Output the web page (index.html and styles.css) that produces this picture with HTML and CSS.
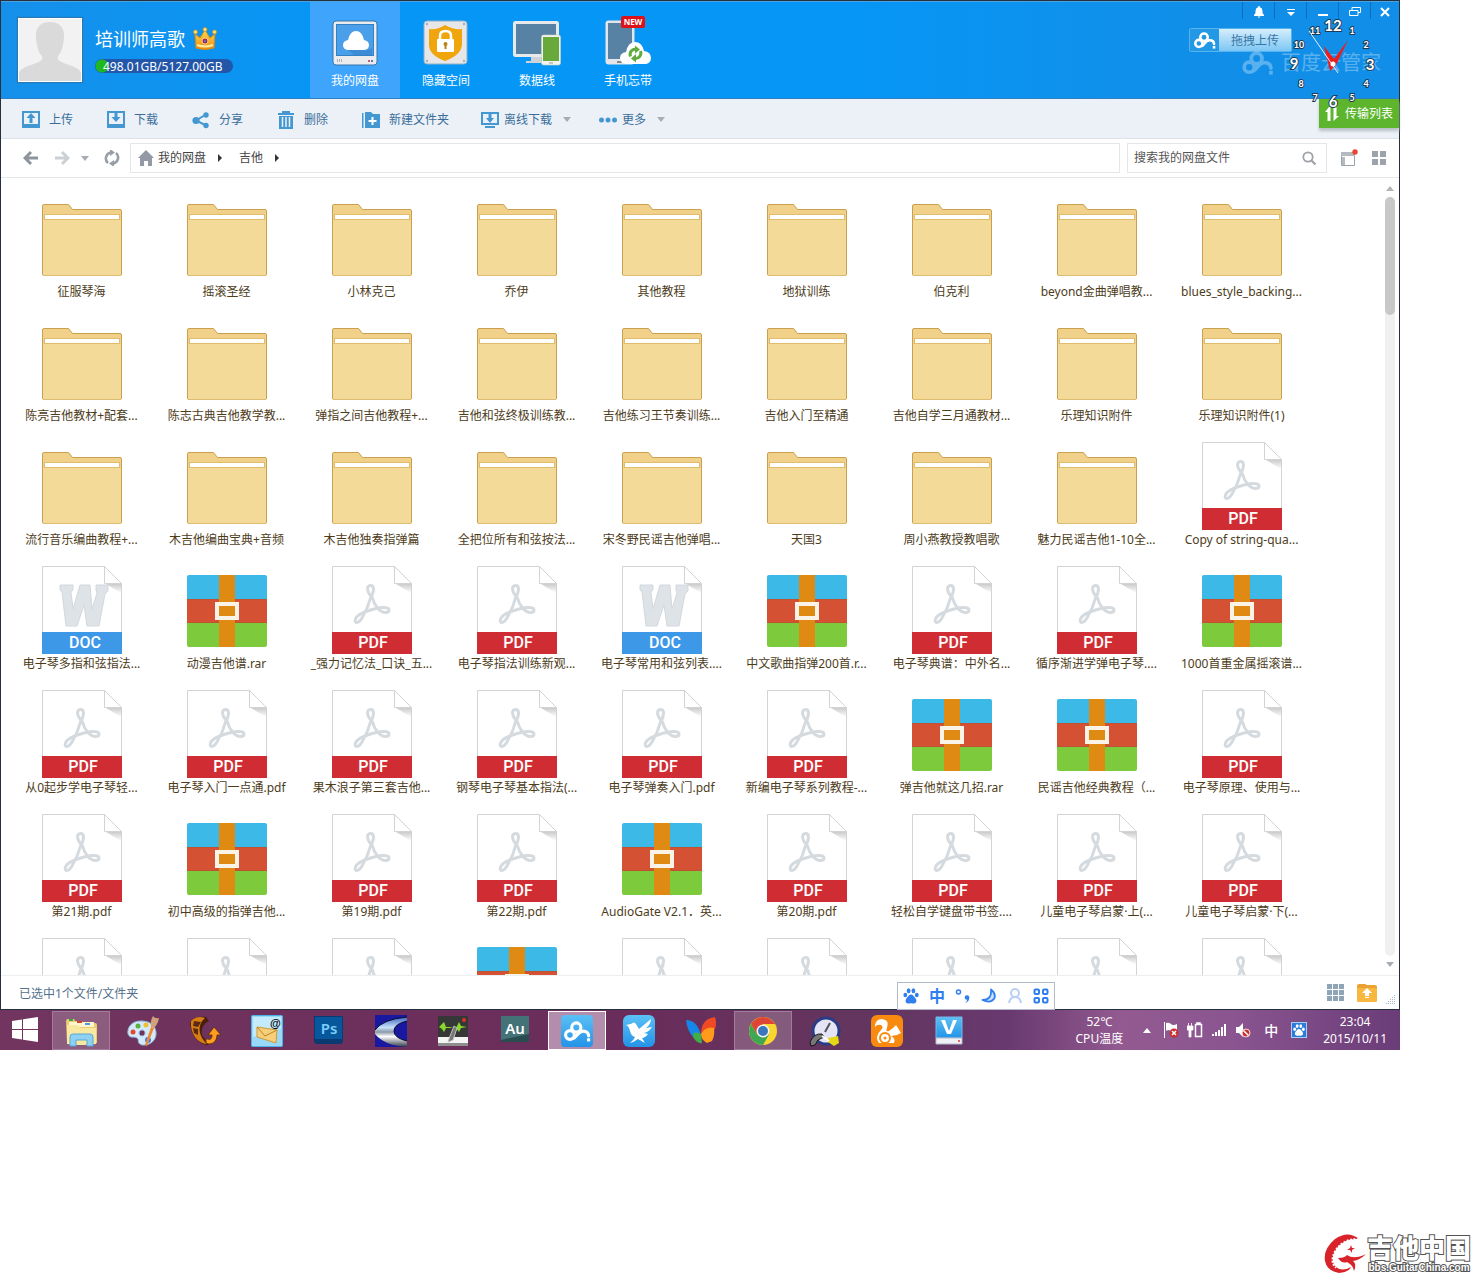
FILE: index.html
```
<!DOCTYPE html>
<html lang="zh-CN">
<head>
  <meta charset="UTF-8" />
  <meta name="viewport" content="width=device-width, initial-scale=1.0"/>
  <title>百度云管家</title>
  <link rel="stylesheet" href="styles.css">
</head>
<body>

  <!-- shared icons -->
  <svg class="defs" aria-hidden="true">
    <defs>
      <linearGradient id="fold-shade" x1="0" y1="0" x2="0" y2="1">
        <stop offset="0" stop-color="#cccccc"/><stop offset="1" stop-color="#ffffff"/>
      </linearGradient>
      <linearGradient id="sky" x1="0" y1="0" x2="0" y2="1">
        <stop offset="0" stop-color="#5bc0f5"/><stop offset="1" stop-color="#2493e8"/>
      </linearGradient>
      <linearGradient id="gold" x1="0" y1="0" x2="0" y2="1">
        <stop offset="0" stop-color="#ffdc4a"/><stop offset="1" stop-color="#f08a12"/>
      </linearGradient>
      <linearGradient id="steel" x1="0" y1="0" x2="0" y2="1">
        <stop offset="0" stop-color="#3a62c0"/><stop offset=".35" stop-color="#c8e2fa"/><stop offset=".5" stop-color="#8c98a8"/><stop offset=".65" stop-color="#ffffff"/><stop offset="1" stop-color="#303848"/>
      </linearGradient>
    </defs>
    <symbol id="folder" viewBox="0 0 80 88">
      <path d="M.5 12q0-1.500 1.500-1.500h24.500l4 5h47.500q1.500 0 1.500 1.500v63q0 1.500-1.500 1.500H2q-1.500 0-1.500-1.500z" fill="#f1d089" stroke="#c9a04d"/>
      <path d="M1 26h78v54q0 1.500-1.500 1.500h-75q-1.500 0-1.500-1.500z" fill="#f4da98"/>
      <rect x="2.500" y="20.500" width="75" height="5" fill="#fff" stroke="#e0bd6c"/>
    </symbol>
    <symbol id="sheet" viewBox="0 0 80 88">
      <path d="M.5.5h62l17 17V87H.5z" fill="#fff" stroke="#d2d3d5"/>
      <path d="M64 18h15v9z" fill="url(#fold-shade)"/>
      <path d="M62.500.5v17h17z" fill="#fff" stroke="#d2d3d5"/>
    </symbol>
    <symbol id="pdf" viewBox="0 0 80 88">
      <use href="#sheet"/>
      <path d="M40.500 32C34 25 34.500 19.500 38.500 19.500S42.500 25 38.500 32C36.500 40 33 47 30 52 26 58.500 22 57 23.500 53 25 49 32 46 37 44.500 44 42 49 41 53 41.500 58.500 42 58 46.500 53.500 46.500 48 46.500 42.500 40 40.500 32z" fill="none" stroke="#d5dadf" stroke-width="3" stroke-linejoin="round"/>
      <rect y="66" width="80" height="22" fill="#d02c33"/>
      <text class="badge" x="41" y="82">PDF</text>
    </symbol>
    <symbol id="doc" viewBox="0 0 80 88">
      <use href="#sheet"/>
      <path d="M18 19h13v5l-2 2 2 17 7-24h10l2 24 5-16-1-3v-5h12v6l-3 3-6 32H45l-3-21-7 21H24l-4-34-2-2z" fill="#dee3e8" stroke="#d3d8dd"/>
      <rect y="66" width="80" height="22" fill="#3d98e8"/>
      <text class="badge" x="43" y="82">DOC</text>
    </symbol>
    <symbol id="rar" viewBox="0 0 80 88">
      <path d="M0 33V11q0-2 2-2h76q2 0 2 2v22z" fill="#3db9e7"/>
      <path d="M0 33h80v24H0z" fill="#d55133"/>
      <path d="M0 57h80v22q0 2-2 2H2q-2 0-2-2z" fill="#7dca3c"/>
      <path d="M32 9h16v72H32z" fill="#df8a12"/>
      <path d="M0 33.500h32m16 0h32M0 56.500h32m16 0h32" stroke="#a4552c" stroke-opacity=".45"/>
      <rect x="30" y="38" width="20" height="14" fill="#df8a12" stroke="#faf4e8" stroke-width="4"/>
    </symbol>
    <symbol id="cloud-logo" viewBox="0 0 34 26">
      <g fill="none" stroke="currentColor" stroke-width="4" stroke-linecap="round">
        <circle cx="7.500" cy="17.500" r="5.500"/>
        <circle cx="15.500" cy="8" r="5.800"/>
        <path d="M12 21.500c4-1 5-9 12-9 5 0 7 3 7 6"/>
      </g>
      <rect x="29" y="21.500" width="4" height="4" fill="currentColor"/>
    </symbol>
    <symbol id="paw" viewBox="0 0 16 16">
      <g fill="currentColor">
        <ellipse cx="2.300" cy="7" rx="1.900" ry="2.300"/><ellipse cx="5.600" cy="2.800" rx="1.900" ry="2.500"/>
        <ellipse cx="10.400" cy="2.800" rx="1.900" ry="2.500"/><ellipse cx="13.800" cy="7" rx="1.900" ry="2.300"/>
        <path d="M8 6.500c2 0 3 2 4 3.200 2 2 2 5.300-1 5.800-1.500.2-2-.3-3-.3s-1.500.5-3 .3c-3-.5-3-3.800-1-5.800C5 8.500 6 6.500 8 6.500z"/>
      </g>
    </symbol>
  </svg>

  <main class="desktop">
    <section class="window">
      <header class="titlebar">
        <div class="user">
          <svg class="avatar" viewBox="0 0 64 64">
            <rect width="64" height="64" fill="#f2f2f2"/>
            <path d="M1 64v-9c1-4 6-6 15-9 7-3 9-4 8-8-4-4-5-10-6-18C17 8 24 4 32 4s15 4 14 16c-1 8-2 14-6 18-1 4 1 5 8 8 9 3 14 5 15 9v9z" fill="#dadada"/>
            <rect x=".5" y=".5" width="63" height="63" fill="none" stroke="#fff"/>
          </svg>
          <div class="account">
            <div class="name">培训师高歌
              <svg class="crown" viewBox="0 0 24 24">
                <path d="M3 21 2 7l5 4 5-8 5 8 5-4-1 14q-9 3-18 0z" fill="url(#gold)" stroke="#d98a12"/>
                <path d="M4 18q8 3 16 0" stroke="#fff0a0" stroke-width="2" fill="none"/>
                <g fill="#ffe46a" stroke="#dd8a1b" stroke-width=".7"><circle cx="2.500" cy="5" r="2"/><circle cx="12" cy="2.500" r="2"/><circle cx="21.500" cy="5" r="2"/></g>
                <circle cx="12" cy="14" r="3" fill="#a62b3c" stroke="#f8c9a0"/><circle cx="12" cy="14" r="1" fill="#4580e0"/>
              </svg>
            </div>
            <div class="storage">498.01GB/5127.00GB</div>
          </div>
        </div>

        <nav class="tabs">
          <a class="tab active" href="#">
            <svg viewBox="0 0 48 46">
              <rect x="2" y="1" width="44" height="44" rx="3" fill="#ececee" stroke="#3474ae"/>
              <rect x="5.500" y="4.500" width="37" height="31" fill="#4a9fea" stroke="#3480c4"/>
              <path d="M17 30h20q4-1 4-3v8H23z" fill="#3c8bd4"/>
              <path d="M17 30q-5-.5-5-5 0-4 5-5 2-9 8-9t8 9q5 1 5 5 0 4.500-5 5z" fill="#fff"/>
              <path d="M6.500 39v3m2-3v3m2-3v3" stroke="#b0b0b8"/><path d="M37 40h2v2h-2z" fill="#c8606c"/><path d="M40 40h2v2h-2z" fill="#5578b8"/>
            </svg>
            我的网盘
          </a>
          <a class="tab" href="#">
            <svg viewBox="0 0 48 46">
              <rect x="2" y="1" width="43" height="43" rx="3" fill="#e7e7e9" stroke="#8fb1c8"/>
              <g fill="#a8b0b8"><circle cx="5" cy="4" r="1.200"/><circle cx="42" cy="4" r="1.200"/><circle cx="5" cy="41" r="1.200"/><circle cx="42" cy="41" r="1.200"/></g>
              <path d="M7 9q9 1 16-4 8 5 17 4v16q-1 10-17 16Q7 35 7 25z" fill="#f0a50c"/>
              <path d="M18 20v-4q0-5 5.500-5t5.500 5v4" fill="none" stroke="#fff" stroke-width="2.500"/>
              <rect x="15" y="19" width="17" height="13" rx="1" fill="#fff"/>
              <circle cx="23.500" cy="24" r="2" fill="#b98414"/><path d="M22.500 25h2v4h-2z" fill="#b98414"/>
            </svg>
            隐藏空间
          </a>
          <a class="tab" href="#">
            <svg viewBox="0 0 48 46">
              <path d="M18 36h10v5h4v2H13v-2h5z" fill="#cfd3d8"/>
              <rect x="1.500" y="2.500" width="43" height="33" rx="1" fill="#5882a4" stroke="#e8e9eb" stroke-width="3"/>
              <rect x="28.500" y="15" width="19" height="30" rx="2" fill="#f1f3ee" stroke="#c6d5c0" stroke-width=".6"/>
              <rect x="30" y="17" width="16" height="24" fill="#69a93c"/><path d="M36 43h4" stroke="#999"/>
            </svg>
            数据线
          </a>
          <a class="tab" href="#">
            <svg viewBox="0 0 48 46">
              <rect x="1.500" y=".5" width="29" height="44" rx="3" fill="#e3e5e8"/>
              <rect x="4" y="3" width="24" height="36" fill="#5882a4"/>
              <path d="M13 42h5" stroke="#888" stroke-width="2"/>
              <path d="M22 44q-6-1-6-6 0-5 6-6 2-10 9-10t9 9q7 1 7 7 0 5-5 6z" fill="#fff"/>
              <g fill="none" stroke="#61ac40" stroke-width="3"><path d="M26.500 36.500A5.500 5.500 0 0 1 32 29M36.500 31A5.500 5.500 0 0 1 31 38.500"/></g>
              <path d="m31 25.500 5 4-5 4zM32 34l-5 4.500 5 4z" fill="#61ac40"/>
            </svg>
            手机忘带
            <span class="new">NEW</span>
          </a>
        </nav>

        <div class="title-right">
          <div class="controls">
            <button aria-label="消息"><svg viewBox="0 0 12 12"><path d="M6 0q1 0 1 1.200Q9.500 2 9.500 5v2L11 9v1H1V9l1.500-2V5Q2.500 2 5 1.200 5 0 6 0zM4.500 10.500h3L6 12z" fill="#fff"/></svg></button>
            <button aria-label="菜单"><svg viewBox="0 0 12 12"><path d="M2 3h8v1H2zM2 6h8l-4 4z" fill="#fff"/></svg></button>
            <button aria-label="最小化"><svg viewBox="0 0 12 12"><path d="M1 8h10v2H1z" fill="#fff"/></svg></button>
            <button aria-label="还原"><svg viewBox="0 0 12 12"><path d="M3 4.500v-3h8.500v5H9M.5 4.500H9v5H.5z" fill="none" stroke="#fff"/></svg></button>
            <button aria-label="关闭"><svg viewBox="0 0 12 12"><path d="m2 2 8 8M10 2l-8 8" stroke="#fff" stroke-width="2"/></svg></button>
          </div>
          <button class="drop-upload"><span class="drop-logo"><svg><use href="#cloud-logo"/></svg></span><span class="drop-text">拖拽上传</span></button>
          <div class="brand"><svg><use href="#cloud-logo"/></svg>百度云管家</div>
        </div>
      </header>

      <div class="toolbar">
        <button class="tool"><svg viewBox="0 0 18 18"><path d="M0 0h18v17H0z" fill="#4498d2"/><path d="M2 2h14v13H2z" fill="#ecf1f8"/><path d="m9 2 4.500 5h-3v5h-3V7h-3zM6 0h6v2H6zM2 13h14v2H2z" fill="#4498d2"/></svg>上传</button>
        <button class="tool"><svg viewBox="0 0 18 18"><path d="M0 0h18v17H0z" fill="#4498d2"/><path d="M2 2h14v13H2z" fill="#ecf1f8"/><path d="M7.500 0h3v6h3L9 11 4.500 6h3zM2 13h14v2H2z" fill="#4498d2"/></svg>下载</button>
        <button class="tool"><svg viewBox="0 0 18 18"><path d="M14 3.500 4 9.500l10 5" fill="none" stroke="#4498d2" stroke-width="2"/><g fill="#4498d2"><circle cx="14" cy="4" r="2.700"/><circle cx="4" cy="9.500" r="3.600"/><circle cx="14" cy="14.500" r="2.700"/></g></svg>分享</button>
        <button class="tool"><svg viewBox="0 0 18 18"><path d="M1 2h4V0h8v2h4v2H1zM2 5h14v13H2z" fill="#4498d2"/><path d="M5.500 6v10M9 6v10m3.500-10v10" stroke="#ecf1f8" stroke-width="1.500"/></svg>删除</button>
        <button class="tool"><svg viewBox="0 0 18 18"><path d="M0 2h1.500v15H0zM3 1h6l2 2h7v14H3z" fill="#4498d2"/><path d="M10.500 6v8m-4-4h8" stroke="#fff" stroke-width="2"/></svg>新建文件夹</button>
        <button class="tool has-menu"><svg viewBox="0 0 18 18"><path d="M1 2h16v11H1z" fill="none" stroke="#4498d2" stroke-width="2"/><path d="M4 15h10v2H4zM7.500 3h3v4H13l-4 5-4-5h2.500z" fill="#4498d2"/></svg>离线下载<i class="caret"></i></button>
        <button class="tool has-menu"><svg viewBox="0 0 18 18"><g fill="#4498d2"><circle cx="2.500" cy="9" r="2.500"/><circle cx="9" cy="9" r="2.500"/><circle cx="15.500" cy="9" r="2.500"/></g></svg>更多<i class="caret"></i></button>
        <button class="transfers"><svg viewBox="0 0 14 14"><path d="M4 0 0 5h2.500v9h3V0zM8.500 0v14L14 9h-2.500V0z" fill="#fff"/></svg>传输列表</button>
      </div>

      <div class="addressbar">
        <div class="history">
          <button aria-label="后退"><svg viewBox="0 0 16 16"><path d="M15 8H2m6-6L2 8l6 6" fill="none" stroke="#8d949d" stroke-width="3"/></svg></button>
          <button aria-label="前进"><svg viewBox="0 0 16 16"><path d="M1 8h13M8 2l6 6-6 6" fill="none" stroke="#ccd0d5" stroke-width="3"/></svg></button>
          <button class="narrow" aria-label="历史"><i class="caret"></i></button>
          <button aria-label="刷新"><svg viewBox="0 0 16 16"><path d="M4 13A6 6 0 0 1 7 2.500M12 3A6 6 0 0 1 9 13.500" fill="none" stroke="#989fa7" stroke-width="2.600"/><path d="m6-1 5 3.500L6 6zM10 17l-5-3.500L10 10z" fill="#989fa7"/></svg></button>
        </div>
        <nav class="path">
          <svg class="home" viewBox="0 0 16 16"><path d="m8 0 8 8h-2v8h-4v-5H6v5H2V8H0z" fill="#939aa5"/></svg>
          <a href="#">我的网盘</a><i class="next"></i>
          <a href="#">吉他</a><i class="next"></i>
        </nav>
        <label class="search">
          <input type="text" placeholder="搜索我的网盘文件" aria-label="搜索我的网盘文件">
          <svg viewBox="0 0 14 14"><circle cx="6" cy="6" r="4.700" fill="none" stroke="#9da2a8" stroke-width="1.800"/><path d="m9 9 4.500 4.500" stroke="#9da2a8" stroke-width="2.200"/></svg>
        </label>
        <button class="view" aria-label="布局"><svg viewBox="0 0 18 18"><path d="M1.500 3.500h13v13h-13z" fill="#fff" stroke="#9ca2aa"/><path d="M1 3h14v4H1zM2 8h3v8H2z" fill="#b5bac1"/><circle cx="15" cy="3" r="2.700" fill="#e8452a"/></svg></button>
        <button class="view" aria-label="缩略图"><svg viewBox="0 0 18 18"><path d="M2 2h6v6H2zm8 0h6v6h-6zM2 10h6v6H2zm8 0h6v6h-6z" fill="#9ca3ab"/></svg></button>
      </div>

      <div class="content">
        <ul class="files">
          <li class="file"><svg><use href="#folder"/></svg>征服琴海</li>
          <li class="file"><svg><use href="#folder"/></svg>摇滚圣经</li>
          <li class="file"><svg><use href="#folder"/></svg>小林克己</li>
          <li class="file"><svg><use href="#folder"/></svg>乔伊</li>
          <li class="file"><svg><use href="#folder"/></svg>其他教程</li>
          <li class="file"><svg><use href="#folder"/></svg>地狱训练</li>
          <li class="file"><svg><use href="#folder"/></svg>伯克利</li>
          <li class="file"><svg><use href="#folder"/></svg>beyond金曲弹唱教...</li>
          <li class="file"><svg><use href="#folder"/></svg>blues_style_backing...</li>

          <li class="file"><svg><use href="#folder"/></svg>陈亮吉他教材+配套...</li>
          <li class="file"><svg><use href="#folder"/></svg>陈志古典吉他教学教...</li>
          <li class="file"><svg><use href="#folder"/></svg>弹指之间吉他教程+...</li>
          <li class="file"><svg><use href="#folder"/></svg>吉他和弦终极训练教...</li>
          <li class="file"><svg><use href="#folder"/></svg>吉他练习王节奏训练...</li>
          <li class="file"><svg><use href="#folder"/></svg>吉他入门至精通</li>
          <li class="file"><svg><use href="#folder"/></svg>吉他自学三月通教材...</li>
          <li class="file"><svg><use href="#folder"/></svg>乐理知识附件</li>
          <li class="file"><svg><use href="#folder"/></svg>乐理知识附件(1)</li>

          <li class="file"><svg><use href="#folder"/></svg>流行音乐编曲教程+...</li>
          <li class="file"><svg><use href="#folder"/></svg>木吉他编曲宝典+音频</li>
          <li class="file"><svg><use href="#folder"/></svg>木吉他独奏指弹篇</li>
          <li class="file"><svg><use href="#folder"/></svg>全把位所有和弦按法...</li>
          <li class="file"><svg><use href="#folder"/></svg>宋冬野民谣吉他弹唱...</li>
          <li class="file"><svg><use href="#folder"/></svg>天国3</li>
          <li class="file"><svg><use href="#folder"/></svg>周小燕教授教唱歌</li>
          <li class="file"><svg><use href="#folder"/></svg>魅力民谣吉他1-10全...</li>
          <li class="file"><svg><use href="#pdf"/></svg>Copy of string-qua...</li>

          <li class="file"><svg><use href="#doc"/></svg>电子琴多指和弦指法...</li>
          <li class="file"><svg><use href="#rar"/></svg>动漫吉他谱.rar</li>
          <li class="file"><svg><use href="#pdf"/></svg>_强力记忆法_口诀_五...</li>
          <li class="file"><svg><use href="#pdf"/></svg>电子琴指法训练新观...</li>
          <li class="file"><svg><use href="#doc"/></svg>电子琴常用和弦列表....</li>
          <li class="file"><svg><use href="#rar"/></svg>中文歌曲指弹200首.r...</li>
          <li class="file"><svg><use href="#pdf"/></svg>电子琴典谱：中外名...</li>
          <li class="file"><svg><use href="#pdf"/></svg>循序渐进学弹电子琴....</li>
          <li class="file"><svg><use href="#rar"/></svg>1000首重金属摇滚谱...</li>

          <li class="file"><svg><use href="#pdf"/></svg>从0起步学电子琴轻...</li>
          <li class="file"><svg><use href="#pdf"/></svg>电子琴入门一点通.pdf</li>
          <li class="file"><svg><use href="#pdf"/></svg>果木浪子第三套吉他...</li>
          <li class="file"><svg><use href="#pdf"/></svg>钢琴电子琴基本指法(...</li>
          <li class="file"><svg><use href="#pdf"/></svg>电子琴弹奏入门.pdf</li>
          <li class="file"><svg><use href="#pdf"/></svg>新编电子琴系列教程-...</li>
          <li class="file"><svg><use href="#rar"/></svg>弹吉他就这几招.rar</li>
          <li class="file"><svg><use href="#rar"/></svg>民谣吉他经典教程（...</li>
          <li class="file"><svg><use href="#pdf"/></svg>电子琴原理、使用与...</li>

          <li class="file"><svg><use href="#pdf"/></svg>第21期.pdf</li>
          <li class="file"><svg><use href="#rar"/></svg>初中高级的指弹吉他...</li>
          <li class="file"><svg><use href="#pdf"/></svg>第19期.pdf</li>
          <li class="file"><svg><use href="#pdf"/></svg>第22期.pdf</li>
          <li class="file"><svg><use href="#rar"/></svg>AudioGate V2.1．英...</li>
          <li class="file"><svg><use href="#pdf"/></svg>第20期.pdf</li>
          <li class="file"><svg><use href="#pdf"/></svg>轻松自学键盘带书签....</li>
          <li class="file"><svg><use href="#pdf"/></svg>儿童电子琴启蒙·上(...</li>
          <li class="file"><svg><use href="#pdf"/></svg>儿童电子琴启蒙·下(...</li>

          <li class="file"><svg><use href="#pdf"/></svg></li>
          <li class="file"><svg><use href="#pdf"/></svg></li>
          <li class="file"><svg><use href="#pdf"/></svg></li>
          <li class="file"><svg><use href="#rar"/></svg></li>
          <li class="file"><svg><use href="#pdf"/></svg></li>
          <li class="file"><svg><use href="#pdf"/></svg></li>
          <li class="file"><svg><use href="#pdf"/></svg></li>
          <li class="file"><svg><use href="#pdf"/></svg></li>
          <li class="file"><svg><use href="#pdf"/></svg></li>
        </ul>
        <div class="scrollbar">
          <i class="caret up"></i>
          <div class="track"><div class="thumb"></div></div>
          <i class="caret"></i>
        </div>
      </div>

      <footer class="statusbar">
        <span class="selected">已选中1个文件/文件夹</span>
        <button aria-label="网格"><svg viewBox="0 0 20 18"><path d="M2 0h5v5H2zm6 0h5v5H8zm6 0h5v5h-5zM2 6h5v5H2zm6 0h5v5H8zm6 0h5v5h-5zM2 12h5v5H2zm6 0h5v5H8zm6 0h5v5h-5z" fill="#8fa4b4"/></svg></button>
        <button aria-label="上传文件夹"><svg viewBox="0 0 20 18"><path d="M0 2q0-2 2-2h6l2 1h8q2 0 2 2v13q0 2-2 2H2q-2 0-2-2z" fill="#e9a233"/><path d="M0 4h20v12q0 2-2 2H2q-2 0-2-2z" fill="#f8b840"/><path d="m10 4 5 5h-3v3H8V9H5zM8 13h4v1H8z" fill="#fff"/></svg></button>
        <svg class="grip" viewBox="0 0 10 10"><path d="M8 0h1v1H8zM6 2h1v1H6zm2 0h1v1H8zM4 4h1v1H4zm2 0h1v1H6zm2 0h1v1H8zM2 6h1v1H2zm2 0h1v1H4zm2 0h1v1H6zm2 0h1v1H8zM0 8h1v1H0zm2 0h1v1H2zm2 0h1v1H4zm2 0h1v1H6zm2 0h1v1H8z" fill="#a5b8c8"/></svg>
      </footer>

      <!-- input method bar, floats above the status bar -->
      <div class="ime">
        <svg viewBox="0 0 16 16"><use href="#paw"/></svg>
        <b>中</b>
        <svg viewBox="0 0 16 16"><circle cx="3.500" cy="4" r="2" fill="none" stroke="currentColor" stroke-width="1.500"/><circle cx="12" cy="9.500" r="2.300" fill="currentColor"/><path d="M14.300 9.500q0 4-4 5.500 2-2 2-4z" fill="currentColor"/></svg>
        <svg viewBox="0 0 16 16"><path d="M10 1.500q5 4 3.500 8.500Q10 16 1.500 12 11 12 10 1.500z" fill="#cfe0ff" stroke="currentColor" stroke-width="1.800" stroke-linejoin="round"/></svg>
        <svg class="dim" viewBox="0 0 16 16"><circle cx="8" cy="5" r="4" fill="none" stroke="currentColor" stroke-width="2"/><path d="M2 15q1-6 6-6t6 6" fill="none" stroke="currentColor" stroke-width="2"/></svg>
        <svg viewBox="0 0 16 16"><g fill="none" stroke="currentColor" stroke-width="2"><rect x="1.500" y="1.500" width="4.500" height="4.500" rx="1"/><rect x="10" y="1.500" width="4.500" height="4.500" rx="1"/><rect x="1.500" y="10" width="4.500" height="4.500" rx="1"/><rect x="10" y="10" width="4.500" height="4.500" rx="1"/></g></svg>
      </div>
    </section>

    <div class="taskbar">
      <button class="start" aria-label="开始"><svg viewBox="0 0 32 32"><path d="m3 7 10-1.500V15H3zm11-1.700L29 3v12H14zM3 16h10v9.500L3 24zm11 0h15v12l-15-2.300z" fill="#fff"/></svg></button>
      <button class="app open" aria-label="资源管理器"><svg viewBox="0 0 32 32"><path d="M1 6q0-2 2-2h6l1 2h7l1 2h12q2 0 2 2v18q-15 4-30 0z" fill="#e9cd70"/><path d="M4 7h25v5H4z" fill="#fff6cf"/><path d="M2 10h11l2 3h16v16q-15 2-29 0z" fill="#f9e9a0"/><path d="M4 4h4v2H4z" fill="#2fa84a"/><path d="M12 6h5v2h-5z" fill="#d24030"/><path d="M20 8h5v2h-5z" fill="#4a9be0"/><path d="M5 31V22q0-3 3-3h17q3 0 3 3v9h-6v-6H11v6z" fill="#8fd1f2" stroke="#56a8d8"/></svg></button>
      <button class="app" aria-label="画图"><svg viewBox="0 0 32 32"><path d="M14 6C4 6 0 13 1 19c2 5 6 2 9 4s-1 5 5 7c8 1 15-5 14-13C28 9 21 6 14 6zm1 15a3 3 0 1 1 .1 0z" fill="#d5e9f8" fill-rule="evenodd" stroke="#8cb8dc"/><circle cx="6" cy="17" r="2.500" fill="#e04830"/><circle cx="11" cy="11" r="2.500" fill="#59b03c"/><circle cx="19" cy="10" r="2.500" fill="#f0bf30"/><circle cx="21" cy="25" r="3" fill="#3f7ce0"/><path d="m18 30 6-18 3 1-7 18z" fill="#ee8a30"/><path d="M24 12q-1-6 2-11 2 3 6 2-1 6-5 10z" fill="#cfa27c"/></svg></button>
      <button class="app" aria-label="格式转换"><svg viewBox="0 0 32 32"><path d="M1 8C2 3 10 1 17 2l3 4c-6 3-8 8-7 14l7 10C9 30 2 20 1 8z" fill="#48200c"/><path d="M2 6c4-4 9-5 14-3-7 6-8 16 2 26C7 28 1 17 2 6z" fill="#d67d13"/><path d="m5 6 7 1-3 5-5-1zM4 13l5 1v6l-4-2z" fill="#5b2a10"/><path d="M19 24c-3-1-3 5 1 5 6 0 8-5 8-9h4l-7-8-6 8h4c0 3-1 5-4 4z" fill="#ff9e1e" stroke="#663310"/></svg></button>
      <button class="app" aria-label="邮件"><svg viewBox="0 0 32 32"><rect x=".5" y=".5" width="31" height="31" rx="1" fill="#9ad9f5" stroke="#48b3e4"/><path d="M2 2h28v12L2 22z" fill="#c4ebfb"/><path d="m6 12 20 3-1 13-19-6z" fill="#f6cf79" stroke="#cf9838"/><path d="m6 12 8 9 12-6" fill="none" stroke="#b98228"/><text x="19" y="12" class="at">@</text></svg></button>
      <button class="app" aria-label="Photoshop"><svg viewBox="0 0 32 32"><path d="M1 1h29v26l-2 2H3l-2-2z" fill="#0b3a72"/><path d="M2 2h27v22H2z" fill="#07579c"/><text x="16" y="19" class="adobe ps">Ps</text></svg></button>
      <button class="app" aria-label="播放器"><svg viewBox="0 0 32 32"><path d="M0 0h32v32H0z" fill="#1918a0"/><path d="M32 2Q8 4 0 15v4q10 12 32 13v-6Q19 23 19 16T32 6z" fill="url(#steel)"/><path d="M32 2Q8 4 0 15M32 6Q19 9 19 16t13 10" fill="none" stroke="#080830"/></svg></button>
      <button class="app" aria-label="录音"><svg viewBox="0 0 32 32"><path d="M1 1h30v22H1z" fill="#353836"/><path d="M1 22h30v6H1z" fill="#f4f4f4"/><path d="M1 28h30v3H1z" fill="#8e8e8e"/><path d="m2 12 3-3 2-2 2 5 4 0 3 1 3 0 3-6 2 4 6 1-6 1-2 4-3-4-6 0-4 0-2 4-2-3z" fill="#88d72a"/><path d="m17 11 3 2-4 12-5 2 2-6z" fill="#777" stroke="#c0c0c0"/><circle cx="27" cy="5" r="2" fill="#d32"/></svg></button>
      <button class="app" aria-label="Audition"><svg viewBox="0 0 32 32"><path d="M2 1h28v26H2z" fill="#284c50"/><path d="M2 1h28v18L2 25z" fill="#437277"/><text x="16" y="19" class="adobe au">Au</text></svg></button>
      <button class="app current" aria-label="百度云管家"><svg viewBox="0 0 32 32"><rect width="32" height="32" rx="4" fill="url(#sky)"/><use href="#cloud-logo" class="on-blue" x="3" y="6" width="27" height="21"/></svg></button>
      <button class="app" aria-label="迅雷"><svg viewBox="0 0 32 32"><rect width="32" height="32" rx="6" fill="url(#sky)"/><path d="M3 10q4-1 5-1Q11 6 13 9l3 5L28 4q0 5-5 9l6-1q-3 5-8 6l4 1q-3 4-6 4l3 5q-5-3-7-4-4 3-8 4 4-3 5-6-4-1-5-6-1-5-4-6z" fill="#fff"/></svg></button>
      <button class="app" aria-label="MSN"><svg viewBox="0 0 32 32"><path d="M1 5q11 0 15 15-3 3-7 3Q2 16 1 5z" fill="#1687e8"/><path d="M30 2q-14 2-14 17 12-1 14-5 2-6 0-12z" fill="#f04924"/><path d="M16 19q5-8 13-6 1 8-2 13l-5 2q-6-3-6-9z" fill="#ff9a1b"/><path d="M16 19q-9-4-8 3 4 7 9 6z" fill="#3fae49"/></svg></button>
      <button class="app open" aria-label="Chrome"><svg viewBox="0 0 32 32"><circle cx="16" cy="16" r="14" fill="#fbd52f"/><path d="M3.900 9A14 14 0 0 1 28.100 9H16L10 19.500z" fill="#dd4634"/><path d="M3.900 9A14 14 0 0 0 16 30l6-10.500H10z" fill="#3fa751"/><circle cx="16" cy="16" r="6.500" fill="#f5f5f5"/><circle cx="16" cy="16" r="5" fill="#3977bd"/></svg></button>
      <button class="app" aria-label="时钟"><svg viewBox="0 0 32 32"><circle cx="17" cy="16" r="13" fill="#e4e4f6" stroke="#2a3c86" stroke-width="3"/><path d="m16 17 5-9" stroke="#555" stroke-width="2"/><path d="M1 27q4-9 12-8l2 3-6 3-3 5-4 1z" fill="#777" stroke="#151515"/><path d="m19 23 10-2 1 7-5 3-6-4z" fill="#e6d815"/><path d="m13 21 7 5" stroke="#fff" stroke-width="2"/></svg></button>
      <button class="app" aria-label="UC"><svg viewBox="0 0 32 32"><rect width="32" height="32" rx="6" fill="#f98a10"/><path d="M8 28Q3 22 10 15q3-3 0-5-4-1-6 2 0-8 7-8 8 1 5 9-2 4 2 3l4-3 3-3 2 3 3 5-4 2-6 1q5 3 3 7z" fill="#fff"/><circle cx="14" cy="23" r="5" fill="#fff" stroke="#f98a10" stroke-width="2"/><circle cx="14" cy="23" r="1.500" fill="#f98a10"/></svg></button>
      <button class="app" aria-label="微云"><svg viewBox="0 0 32 32"><path d="M3 2h26v21H3z" fill="url(#sky)" stroke="#79b8e8"/><path d="M3 23h26v6H3z" fill="#f0f1f5" stroke="#b4b8c8"/><path d="M8 5h4l4 11 4-11h4l-6 14h-4z" fill="#fff"/><circle cx="26" cy="26" r="1" fill="#e33"/></svg></button>

      <div class="tray">
        <div class="reading">52℃<br>CPU温度</div>
        <i class="caret up"></i>
        <svg viewBox="0 0 16 16"><path d="M1 0h1v16H1zM3 1q3-1 5 1t6 0v7q-3 2-6 0T3 9z" fill="#fff"/><circle cx="11" cy="11" r="4.500" fill="#c83030"/><path d="m9 9 4 4m0-4-4 4" stroke="#fff" stroke-width="1.500"/></svg>
        <svg viewBox="0 0 16 16"><path d="M8.500 2.500h6v12h-6zM10 1h3v1h-3z" fill="none" stroke="#fff" stroke-width="1.500"/><path d="M1.500 1v3m3-3v3M0 4h6v4H4v7H2V8H0z" fill="#fff" stroke="#fff" stroke-width=".8"/></svg>
        <svg viewBox="0 0 16 16"><path d="M1 12h2v2H1zm3-2h2v4H4zm3-2h2v6H7zm3-3h2v9h-2zm3-3h2v12h-2z" fill="#fff"/></svg>
        <svg viewBox="0 0 16 16"><path d="M1 5h3l4-4v14l-4-4H1z" fill="#fff"/><circle cx="11" cy="11" r="4" fill="#c83030" stroke="#f7dada"/><path d="m8.500 8.500 5 5" stroke="#fff" stroke-width="1.500"/></svg>
        <b>中</b>
        <svg class="paw-badge" viewBox="0 0 16 16"><rect x=".5" y=".5" width="15" height="15" fill="#2b7cd8" stroke="#a9cdf5"/><use href="#paw" x="2" y="2" width="12" height="12"/></svg>
        <time class="clock-text">23:04<br>2015/10/11</time>
      </div>
    </div>

    <!-- desktop clock gadget -->
    <svg class="clock" viewBox="0 0 100 100">
      <g class="major">
        <text x="50" y="17">12</text><text x="87" y="56">3</text><text x="50" y="93">6</text><text x="11" y="55">9</text>
      </g>
      <g class="minor">
        <text x="69" y="20">1</text><text x="83" y="34">2</text><text x="83" y="73">4</text><text x="69" y="87">5</text>
        <text x="32" y="87">7</text><text x="18" y="73">8</text><text x="16" y="34">10</text><text x="32" y="20">11</text>
      </g>
      <path d="m41 32 10 13L65 26 53 51l-6 6z" fill="#ee1c1c"/>
      <path d="m26 17 29 42" stroke="#e8eef5"/>
      <circle cx="50" cy="50" r="2.500" fill="#fff"/>
    </svg>
  </main>

  <footer class="forum">
    <svg class="forum-logo" viewBox="0 0 44 40">
      <path d="M36 5Q25-4 12 5 0 15 2 27q2 10 14 12 10-1 12-6-9 5-15 0Q6 26 14 14q8-10 22-9z" fill="#d8232a"/>
      <path d="M36 5Q20 4 12 17q-6 11 1 17" fill="none" stroke="#fff" stroke-width="1.500" stroke-dasharray="2 1.500"/>
      <path d="M15 24q7 0 9-3 7 5 19-1-6 6-13 7 4 3 1 10-1-6-7-9-5 2-9-4zM28 11l1 3 3 0-3 2 0 3-2-3-3 0 3-2z" fill="#d8232a"/>
    </svg>
    <div class="forum-name"><strong>吉他中国</strong><span>bbs.GuitarChina.com</span></div>
  </footer>

</body>
</html>
```
FILE: styles.css
```
:root {
  --blue: #0696f6;
  --blue-dark: #118fe8;
  --link: #3a6e9a;
  --border: #e4e6ea;
  --tint: #ecf1f8;
}

* {
  box-sizing: border-box;
}

body {
  margin: 0;
  height: 100vh;
  display: flex;
  flex-direction: column;
  background: #fff;
  font-family: "Noto Sans", "Noto Sans CJK SC", sans-serif;
  font-size: 12px;
  line-height: 20px;
  color: #444;
}

button {
  border: 0;
  padding: 0;
  background: none;
  font: inherit;
  color: inherit;
}

a {
  color: inherit;
  text-decoration: none;
}

svg {
  display: block;
  flex: none;
}

.defs {
  position: absolute;
  width: 0;
  height: 0;
}

.caret {
  width: 0;
  height: 0;
  border: 4px solid transparent;
  border-top: 5px solid #a8adb3;
  border-bottom: 0;
}

.caret.up {
  border-top: 0;
  border-bottom: 5px solid #b4b4b4;
}

.desktop {
  position: relative;
  flex: 1;
  min-height: 0;
  margin-right: 78px;
  display: flex;
  flex-direction: column;
}

.window {
  position: relative;
  flex: 1;
  min-height: 0;
  display: flex;
  flex-direction: column;
  border: 1px solid #26303c;
}

/* title bar */
.titlebar {
  display: flex;
  height: 98px;
  border-top: 1px solid #4aa4e4;
  border-bottom: 1px solid #2f7fc4;
  background: linear-gradient(to right, #1590ea, var(--blue) 25%, var(--blue) 60%, var(--blue-dark) 85%);
  color: #fff;
}

.user {
  display: flex;
  gap: 13px;
  width: 309px;
  padding: 16px 0 0 17px;
}

.avatar {
  width: 64px;
  height: 64px;
  box-shadow: 0 0 1px 1px #2878b4;
}

.name {
  display: flex;
  align-items: center;
  gap: 8px;
  height: 41px;
  font-size: 18px;
}

.crown {
  width: 24px;
  height: 24px;
}

.storage {
  width: 138px;
  height: 14px;
  padding-left: 8px;
  border-radius: 7px;
  background: radial-gradient(circle at 7px 7px, #20b820 6px, transparent 7px), #2256a8;
  line-height: 15px;
}

.tabs {
  display: flex;
  gap: 1px;
}

.tab {
  position: relative;
  width: 90px;
  padding-top: 18px;
  text-align: center;
}

.tab svg {
  width: 48px;
  height: 46px;
  margin: 0 auto 5px;
}

.tab.active {
  background: #3fa5fc;
}

.new {
  position: absolute;
  top: 14px;
  left: 38px;
  width: 24px;
  border-radius: 2px;
  background: #dd1218;
  font-size: 8px;
  font-weight: bold;
  line-height: 12px;
}

.title-right {
  flex: 1;
  display: flex;
  flex-direction: column;
  align-items: flex-end;
}

.controls {
  display: flex;
}

.controls button {
  width: 32px;
  height: 17px;
  padding: 3px 0 0 10px;
  border-left: 1px solid #0c6fbc;
}

.controls button:last-child {
  width: 29px;
  padding-left: 8px;
}

.controls svg {
  width: 12px;
  height: 12px;
}

.drop-upload {
  display: flex;
  height: 24px;
  margin: 9px 107px 0 0;
  border: 1px solid #55b4f0;
  border-radius: 2px;
}

.drop-logo {
  width: 29px;
  padding: 3px 4px;
  background: #2398e4;
}

.drop-logo svg {
  width: 22px;
  height: 17px;
}

.drop-text {
  width: 72px;
  background: linear-gradient(#d5eefc, #7cc6f4);
  color: #3a76a4;
  line-height: 24px;
  height: 22px;
}

.brand {
  display: flex;
  align-items: center;
  gap: 6px;
  height: 22px;
  margin-right: 18px;
  font-size: 20px;
  opacity: .3;
}

.brand svg {
  width: 34px;
  height: 24px;
}

/* toolbar */
.toolbar {
  display: flex;
  gap: 34px;
  height: 40px;
  padding-left: 21px;
  border-bottom: 1px solid #dde2e8;
  background: var(--tint);
  color: var(--link);
}

.tool {
  display: flex;
  align-items: center;
  gap: 9px;
  padding-top: 2px;
}

.tool svg {
  width: 18px;
  height: 18px;
}

.has-menu {
  gap: 5px;
  margin-left: -2px;
}

.has-menu + .has-menu {
  margin-left: -6px;
}

.has-menu .caret {
  margin-left: 6px;
}

.transfers {
  display: flex;
  align-items: center;
  gap: 6px;
  height: 29px;
  margin-left: auto;
  padding: 1px 6px 0;
  background: #5cb52c;
  box-shadow: 0 3px 3px #b8c0c8;
  color: #fff;
}

.transfers svg {
  width: 14px;
  height: 14px;
}

/* address bar */
.addressbar {
  display: flex;
  align-items: center;
  height: 39px;
  padding-right: 11px;
  border-bottom: 1px solid var(--border);
}

.history {
  display: flex;
  align-items: center;
  gap: 15px;
  width: 129px;
  padding-left: 22px;
}

.history button {
  display: flex;
}

.history svg {
  width: 16px;
  height: 16px;
}

.history .narrow {
  margin-left: -4px;
}

.path {
  flex: 1;
  display: flex;
  align-items: center;
  height: 30px;
  margin-right: 7px;
  padding-left: 7px;
  border: 1px solid var(--border);
}

.home {
  width: 16px;
  height: 16px;
  margin-right: 4px;
}

.next {
  margin: 0 17px 0 12px;
  border: 4px solid transparent;
  border-left: 4px solid #333;
  border-right: 0;
}

.search {
  display: flex;
  align-items: center;
  width: 200px;
  height: 30px;
  margin-right: 13px;
  padding: 0 10px 0 6px;
  border: 1px solid var(--border);
}

.search input {
  flex: 1;
  min-width: 0;
  border: 0;
  padding: 0;
  outline: 0;
  font: inherit;
}

.search input::placeholder {
  color: #555;
  opacity: 1;
}

.search svg {
  width: 14px;
  height: 14px;
}

.view + .view {
  margin-left: 12px;
}

.view svg {
  width: 18px;
  height: 18px;
}

/* files */
.content {
  flex: 1;
  min-height: 0;
  display: flex;
  overflow: hidden;
}

.files {
  flex: 1;
  display: grid;
  grid-template-columns: repeat(auto-fill, 145px);
  grid-auto-rows: 108px;
  row-gap: 16px;
  margin: 0;
  padding: 16px 0 0 8px;
  list-style: none;
}

.file {
  color: #4d3c1a;
  text-align: center;
  white-space: nowrap;
}

.file svg {
  width: 80px;
  height: 88px;
  margin: 0 auto;
}

.badge {
  fill: #fff;
  font: 500 16px Roboto, sans-serif;
  text-anchor: middle;
}

.scrollbar {
  display: flex;
  flex-direction: column;
  align-items: center;
  gap: 6px;
  width: 10px;
  margin-right: 4px;
  padding: 8px 0;
}

.track {
  flex: 1;
  width: 10px;
  border-radius: 5px;
  background: #f0f0f0;
}

.thumb {
  height: 118px;
  border-radius: 5px;
  background: #c8c8c8;
}

/* status bar */
.statusbar {
  display: flex;
  align-items: center;
  gap: 12px;
  height: 34px;
  padding: 0 3px 0 18px;
  border-top: 1px solid #eceef0;
}

.selected {
  flex: 1;
  padding-top: 2px;
  color: #54718c;
}

.statusbar button svg {
  width: 20px;
  height: 18px;
}

.grip {
  align-self: flex-end;
  width: 10px;
  height: 10px;
  margin: 0 0 4px -3px;
}

.ime {
  position: absolute;
  right: 344px;
  bottom: -1px;
  display: flex;
  align-items: center;
  justify-content: space-between;
  width: 158px;
  height: 28px;
  padding: 0 5px;
  border: 1px solid #b4b9cc;
  background: #fff;
  color: #2f7fee;
  font-size: 16px;
}

.ime svg {
  width: 16px;
  height: 16px;
}

.ime .dim {
  color: #b9d0f5;
}

/* taskbar */
.taskbar {
  display: flex;
  gap: 4px;
  height: 40px;
  background: linear-gradient(to right, #71355f, #6a2c5a 45%, #63365f 62%, #68396f 72%, #925a90 80%, #8a5590 88%, #6a3c78);
}

.start {
  width: 48px;
  padding-left: 9px;
}

.app {
  width: 58px;
  height: 39px;
  margin-top: 1px;
  border: 1px solid transparent;
}

.app svg {
  width: 32px;
  height: 32px;
  margin: 0 auto;
}

.start svg {
  width: 32px;
  height: 32px;
}

.app.open {
  border-color: #a27c9c;
  background: rgba(255, 255, 255, .2);
}

.app.current {
  border-color: #fff;
  background: #b48cac;
}

.on-blue {
  color: #fff;
}

.at {
  font: bold 11px "Liberation Sans", sans-serif;
}

.adobe {
  font: 600 15px "Noto Sans", sans-serif;
  text-anchor: middle;
}

.ps {
  fill: #7ccdf8;
}

.au {
  fill: #fff;
}

.tray {
  display: flex;
  align-items: center;
  gap: 8px;
  margin-left: auto;
  padding-right: 13px;
  color: #fff;
  line-height: 17px;
  text-align: center;
}

.tray svg {
  width: 16px;
  height: 16px;
}

.tray b {
  width: 24px;
  font-size: 14px;
  font-weight: 500;
}

.reading {
  margin-right: 12px;
}

.tray .caret {
  margin-right: 4px;
  border-bottom-color: #fff;
}

.clock-text {
  margin-left: 8px;
}

/* clock gadget */
.clock {
  position: absolute;
  top: 14px;
  right: 17px;
  width: 100px;
  height: 100px;
}

.clock text {
  fill: #fff;
  stroke: #1c3c58;
  stroke-width: 2px;
  paint-order: stroke;
  font-family: Lato, sans-serif;
  font-weight: bold;
  text-anchor: middle;
}

.major {
  font-size: 15px;
}

.minor {
  font-size: 9px;
}

/* forum signature */
.forum {
  display: flex;
  justify-content: flex-end;
  align-items: flex-end;
  height: 234px;
  padding: 0 7px 10px 0;
}

.forum-logo {
  width: 44px;
  height: 40px;
}

.forum-name {
  display: flex;
  flex-direction: column;
  align-items: center;
  color: #fff;
  -webkit-text-stroke: 2px #555;
  paint-order: stroke fill;
}

.forum-name strong {
  font-size: 26px;
  font-weight: 900;
  line-height: 26px;
}

.forum-name span {
  font: bold 10px/13px "Liberation Sans", sans-serif;
}
```
